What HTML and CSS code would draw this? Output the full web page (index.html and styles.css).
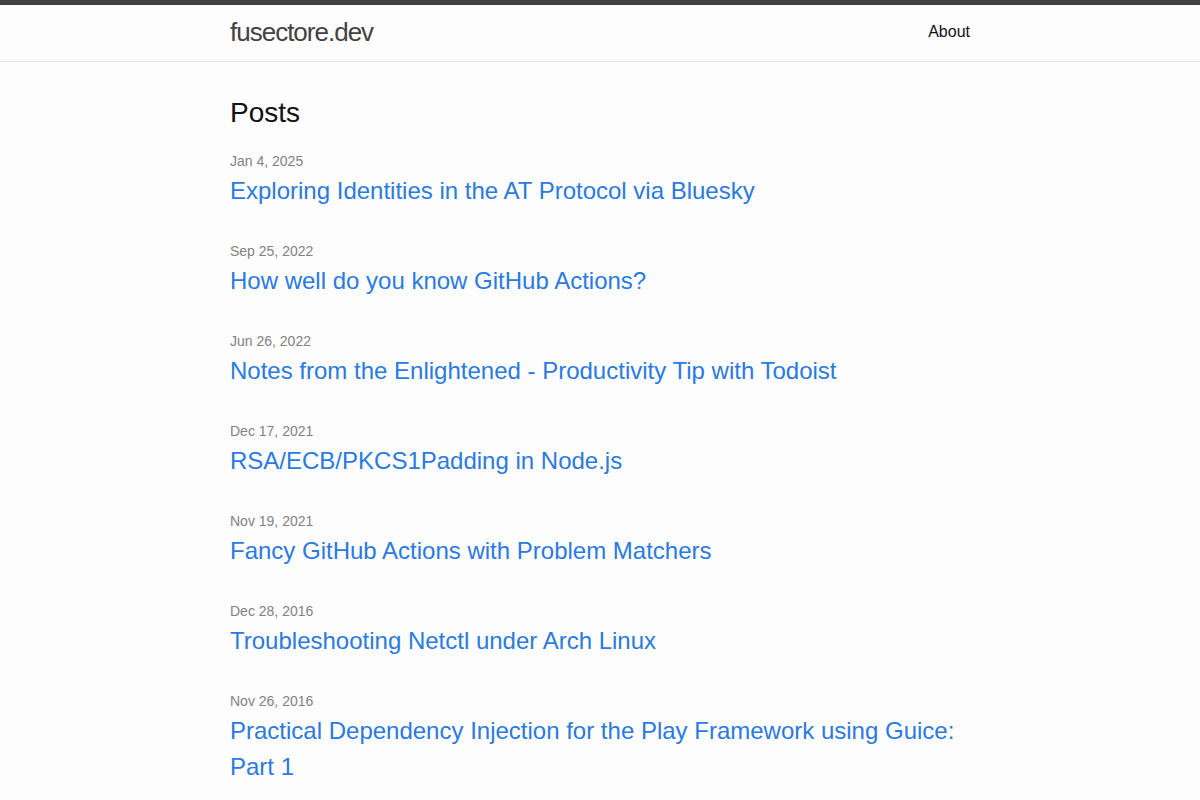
FILE: index.html
```html
<!DOCTYPE html>
<html lang="en">
<head>
    <meta charset="UTF-8">
    <meta name="viewport" content="width=device-width, initial-scale=1.0">
    <title>fusectore.dev</title>
    <link rel="stylesheet" href="styles.css">
</head>
<body>
    <header class="site-header">
        <div class="wrapper header-inner">
            <a class="site-title" href="#">fusectore.dev</a>
            <nav class="site-nav">
                <a class="page-link" href="#">About</a>
            </nav>
        </div>
    </header>

    <main class="page-content">
        <div class="wrapper">
            <h2 class="post-list-heading">Posts</h2>
            <ul class="post-list">
                <li>
                    <span class="post-meta">Jan 4, 2025</span>
                    <h3><a class="post-link" href="#">Exploring Identities in the AT Protocol via Bluesky</a></h3>
                </li>
                <li>
                    <span class="post-meta">Sep 25, 2022</span>
                    <h3><a class="post-link" href="#">How well do you know GitHub Actions?</a></h3>
                </li>
                <li>
                    <span class="post-meta">Jun 26, 2022</span>
                    <h3><a class="post-link" href="#">Notes from the Enlightened - Productivity Tip with Todoist</a></h3>
                </li>
                <li>
                    <span class="post-meta">Dec 17, 2021</span>
                    <h3><a class="post-link" href="#">RSA/ECB/PKCS1Padding in Node.js</a></h3>
                </li>
                <li>
                    <span class="post-meta">Nov 19, 2021</span>
                    <h3><a class="post-link" href="#">Fancy GitHub Actions with Problem Matchers</a></h3>
                </li>
                <li>
                    <span class="post-meta">Dec 28, 2016</span>
                    <h3><a class="post-link" href="#">Troubleshooting Netctl under Arch Linux</a></h3>
                </li>
                <li>
                    <span class="post-meta">Nov 26, 2016</span>
                    <h3><a class="post-link" href="#">Practical Dependency Injection for the Play Framework using Guice: Part 1</a></h3>
                </li>
            </ul>
        </div>
    </main>
</body>
</html>
```

FILE: styles.css
```css
* {
    margin: 0;
    padding: 0;
    box-sizing: border-box;
}

body {
    font: 400 16px/1.5 "Liberation Sans", Arial, sans-serif;
    color: #111;
    background-color: #fdfdfd;
}

a {
    text-decoration: none;
}

.wrapper {
    max-width: 800px;
    margin: 0 auto;
    padding: 0 30px;
}

/* Header */
.site-header {
    box-sizing: content-box;
    border-top: 5px solid #424242;
    border-bottom: 1px solid #e8e8e8;
    min-height: 56px;
}

.header-inner {
    display: flex;
    justify-content: space-between;
    align-items: flex-start;
}

.site-title {
    font-size: 26px;
    font-weight: 300;
    line-height: 54px;
    letter-spacing: -1px;
    color: #424242;
}

.site-nav {
    line-height: 54px;
}

.page-link {
    color: #111;
    line-height: 1.5;
}

/* Post list */
.page-content {
    padding: 30px 0;
}

.post-list-heading {
    font-size: 28px;
    font-weight: 400;
    margin-bottom: 15px;
}

.post-list {
    list-style: none;
}

.post-list > li {
    margin-bottom: 30px;
}

.post-meta {
    font-size: 14px;
    color: #828282;
}

.post-list h3 {
    font-weight: 400;
    margin-bottom: 15px;
}

.post-link {
    display: block;
    font-size: 24px;
    color: #2a7ae2;
}
```
